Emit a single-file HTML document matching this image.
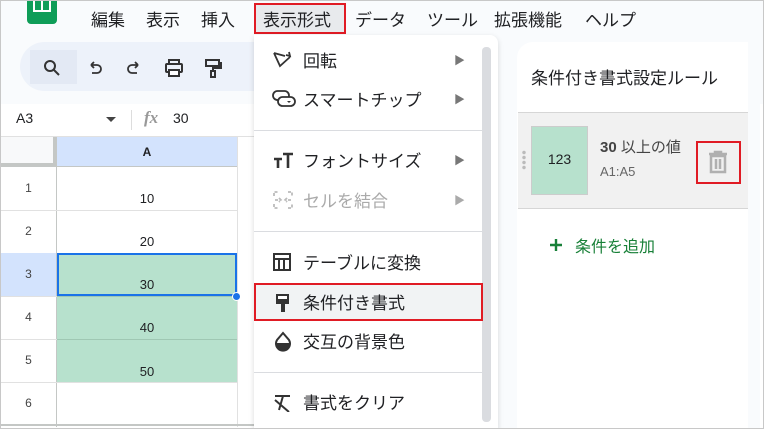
<!DOCTYPE html>
<html><head><meta charset="utf-8"><style>
*{margin:0;padding:0;box-sizing:border-box}
body{width:764px;height:429px;overflow:hidden;background:#fff;font-family:"Liberation Sans","Noto Sans CJK JP",sans-serif;position:relative;color:#202124}
.a{position:absolute}
.frame{left:0;top:0;width:764px;height:429px;border:1px solid #c8c8c8;z-index:50;pointer-events:none}
.mi{position:absolute;font-size:17px;top:6px}
.rh{position:absolute;left:0;width:57px;text-align:center;font-size:12px;color:#444}
.cv{position:absolute;left:57px;width:180px;text-align:center;font-size:13px}
.it{position:absolute;left:254px;width:228px;height:38px;font-size:17px}
.it .t{position:absolute;left:49px;top:6px}
.it .ar{position:absolute;left:200px;top:11px;font-size:11px;color:#777}
.it svg{position:absolute;left:18px;top:9px}
.dv{position:absolute;left:254px;width:228px;height:1px;background:#dadce0}
</style></head><body>
<div class="a frame"></div>
<div class="a" style="left:0;top:0;width:764px;height:104px;background:#f9fbfd"></div>
<div class="a" style="left:27px;top:0;width:30px;height:24px;background:#0f9d58;border-radius:0 0 4px 4px"></div>
<div class="a" style="left:33px;top:0;width:18px;height:12px;border:2px solid #fff;border-top:none"></div>
<div class="a" style="left:41px;top:0;width:2px;height:12px;background:#fff"></div>
<span class="mi" style="left:91px">編集</span>
<span class="mi" style="left:146px">表示</span>
<span class="mi" style="left:201px">挿入</span>
<div class="a" style="left:254px;top:3px;width:92px;height:31px;border:2px solid #e01b24;background:#e8eaed"></div>
<span class="mi" style="left:263px">表示形式</span>
<span class="mi" style="left:355px">データ</span>
<span class="mi" style="left:427px">ツール</span>
<span class="mi" style="left:494px">拡張機能</span>
<span class="mi" style="left:585px">ヘルプ</span>
<div class="a" style="left:20px;top:42px;width:260px;height:49px;background:#edf2fa;border-radius:25px"></div>
<div class="a" style="left:30px;top:50px;width:47px;height:34px;background:#e3e9f4"></div>
<svg class="a" style="left:42px;top:58px" width="20" height="20" viewBox="0 0 20 20"><circle cx="8" cy="8" r="5" fill="none" stroke="#333" stroke-width="2"/><path d="M12 12l5 5" stroke="#333" stroke-width="2"/></svg>
<svg class="a" style="left:86px;top:60px" width="18" height="18" viewBox="0 0 18 18"><path d="M5 5h6a4 4 0 010 8H6M5 5l3-3M5 5l3 3" fill="none" stroke="#333" stroke-width="1.8"/></svg>
<svg class="a" style="left:125px;top:60px" width="18" height="18" viewBox="0 0 18 18"><path d="M13 5H7a4 4 0 000 8h5M13 5l-3-3M13 5l-3 3" fill="none" stroke="#333" stroke-width="1.8"/></svg>
<svg class="a" style="left:163px;top:57px" width="22" height="22" viewBox="0 0 22 22"><rect x="6" y="3" width="10" height="4" fill="none" stroke="#333" stroke-width="2"/><rect x="3" y="7" width="16" height="8" rx="1" fill="none" stroke="#333" stroke-width="2"/><rect x="6" y="13" width="10" height="6" fill="#fff" stroke="#333" stroke-width="2"/></svg>
<svg class="a" style="left:202px;top:57px" width="22" height="22" viewBox="0 0 22 22"><rect x="4" y="3" width="13" height="6" fill="none" stroke="#333" stroke-width="2"/><path d="M17 6h2v5h-8v3" fill="none" stroke="#333" stroke-width="2"/><rect x="9" y="14" width="4" height="6" fill="none" stroke="#333" stroke-width="2"/></svg>
<div class="a" style="left:0;top:104px;width:254px;height:33px;background:#fff;border-bottom:1px solid #e1e1e1"></div>
<span class="a" style="left:16px;top:110px;font-size:14px">A3</span>
<div class="a" style="left:106px;top:117px;border:5px solid transparent;border-top:5px solid #444;border-bottom:none"></div>
<div class="a" style="left:131px;top:110px;width:1px;height:20px;background:#ddd"></div>
<span class="a" style="left:144px;top:108px;font-size:17px;font-style:italic;color:#999;font-family:'Liberation Serif',serif;font-weight:bold">fx</span>
<span class="a" style="left:173px;top:110px;font-size:14px">30</span>
<div class="a" style="left:0;top:137px;width:57px;height:30px;background:#f8f9fa;border-right:4px solid #c4c7c5;border-bottom:4px solid #c4c7c5"></div>
<div class="a" style="left:57px;top:137px;width:180px;height:30px;background:#d3e3fd;border-bottom:1px solid #c4c7c5;text-align:center;font-size:12px;font-weight:bold;padding-top:8px">A</div>
<div class="a" style="left:237px;top:137px;width:1px;height:290px;background:#e1e1e1"></div>
<div class="a" style="left:56px;top:167px;width:1px;height:260px;background:#c4c7c5"></div>
<div class="a" style="left:57px;top:253px;width:180px;height:130px;background:#b7e1cd"></div>
<div class="a" style="left:0;top:253px;width:56px;height:43px;background:#d3e3fd"></div>
<div class="a" style="left:0;top:210px;width:238px;height:1px;background:#e1e1e1"></div>
<div class="a" style="left:0;top:296px;width:238px;height:1px;background:#e1e1e1"></div>
<div class="a" style="left:57px;top:339px;width:180px;height:1px;background:#9fc7b3"></div>
<div class="a" style="left:57px;top:296px;width:180px;height:1px;background:#9fc7b3"></div>
<div class="a" style="left:0;top:339px;width:57px;height:1px;background:#e1e1e1"></div>
<div class="a" style="left:0;top:382px;width:238px;height:1px;background:#e1e1e1"></div>
<div class="a" style="left:0;top:424px;width:254px;height:2px;background:#c4c7c5"></div>
<div class="a" style="left:57px;top:253px;width:180px;height:43px;border:2px solid #1a73e8"></div>
<div class="a" style="left:232px;top:292px;width:9px;height:9px;border-radius:50%;background:#1a73e8;border:1px solid #fff"></div>
<span class="rh" style="top:181px">1</span><span class="cv" style="top:191px">10</span>
<span class="rh" style="top:224px">2</span><span class="cv" style="top:234px">20</span>
<span class="rh" style="top:267px">3</span><span class="cv" style="top:277px">30</span>
<span class="rh" style="top:310px">4</span><span class="cv" style="top:320px">40</span>
<span class="rh" style="top:353px">5</span><span class="cv" style="top:364px">50</span>
<span class="rh" style="top:396px">6</span>
<div class="a" style="left:498px;top:30px;width:262px;height:399px;background:#f9fbfd"></div>
<div class="a" style="left:517px;top:42px;width:231px;height:387px;background:#fff;border-radius:16px 0 0 0"></div>
<span class="a" style="left:531px;top:64px;font-size:17px">条件付き書式設定ルール</span>
<div class="a" style="left:518px;top:112px;width:230px;height:97px;background:#f1f1f1;border-top:1px solid #d6d6d6;border-bottom:1px solid #d6d6d6"></div>
<div class="a" style="left:522px;top:150px;width:4px;height:20px;background:radial-gradient(circle,#bbb 1.5px,transparent 2px) 0 0/4px 5px"></div>
<div class="a" style="left:531px;top:126px;width:57px;height:69px;background:#b7e1cd;border:1px solid #ccc;text-align:center;font-size:14px;padding-top:24px">123</div>
<span class="a" style="left:600px;top:136px;font-size:15px;color:#444"><b>30</b> 以上の値</span>
<span class="a" style="left:600px;top:164px;font-size:13px;color:#666">A1:A5</span>
<div class="a" style="left:696px;top:141px;width:45px;height:43px;border:2px solid #e01b24"></div>
<svg class="a" style="left:707px;top:150px" width="22" height="24" viewBox="0 0 22 24"><path d="M2 4h18M8 4V2h6v2M4 6h14v16H4z" fill="none" stroke="#b0b0b0" stroke-width="2.5"/><path d="M9 9v10M13 9v10" stroke="#b0b0b0" stroke-width="2.5"/></svg>
<svg class="a" style="left:549px;top:238px" width="14" height="14" viewBox="0 0 14 14"><path d="M7 1v12M1 7h12" stroke="#188038" stroke-width="2.4"/></svg>
<span class="a" style="left:575px;top:233px;font-size:16px;color:#188038">条件を追加</span>
<div class="a" style="left:254px;top:35px;width:244px;height:394px;background:#fff;border-radius:0 8px 0 0;box-shadow:0 2px 6px rgba(0,0,0,.15)"></div>
<div class="a" style="left:482px;top:47px;width:9px;height:375px;background:#dadce0;border-radius:4px"></div>
<div class="it" style="top:41px"><svg width="22" height="20" viewBox="0 0 22 20"><path d="M2 3l6 13 10-9M2 3l11 3M14 5l4 1-1-4" fill="none" stroke="#333" stroke-width="1.8"/></svg><span class="t">回転</span><span class="ar">▶</span></div>
<div class="it" style="top:80px"><svg width="24" height="20" viewBox="0 0 24 20"><rect x="1" y="2" width="16" height="9" rx="4.5" fill="none" stroke="#333" stroke-width="1.8"/><rect x="6" y="8" width="17" height="9" rx="4.5" fill="#fff" stroke="#333" stroke-width="1.8"/><path d="M15 12h4l-2 2z" fill="#333"/></svg><span class="t">スマートチップ</span><span class="ar">▶</span></div>
<div class="dv" style="top:130px"></div>
<div class="it" style="top:141px"><svg width="22" height="20" viewBox="0 0 22 20"><path d="M2 9h8M6 9v9M11 4h10M16 4v14" stroke="#333" stroke-width="2.6" fill="none"/></svg><span class="t">フォントサイズ</span><span class="ar">▶</span></div>
<div class="it" style="top:181px;color:#aaa"><svg width="22" height="20" viewBox="0 0 22 20"><path d="M2 6V2h4M16 2h4v4M2 14v4h4M16 18h4v-4M3 10h6M7 8l2 2-2 2M19 10h-6M15 8l-2 2 2 2" fill="none" stroke="#bbb" stroke-width="1.8" stroke-dasharray="3 1.5"/></svg><span class="t">セルを結合</span><span class="ar" style="color:#aaa">▶</span></div>
<div class="dv" style="top:231px"></div>
<div class="it" style="top:243px"><svg width="22" height="20" viewBox="0 0 22 20"><rect x="2" y="2" width="16" height="16" fill="none" stroke="#333" stroke-width="2"/><path d="M2 7h16M7 7v11M12 7v11" stroke="#333" stroke-width="2"/></svg><span class="t">テーブルに変換</span></div>
<div class="it" style="top:283px;background:#f1f3f4;border:2px solid #e01b24;width:229px"><svg width="22" height="22" viewBox="0 0 22 22" style="top:7px;left:16px"><rect x="4" y="2" width="13" height="10" fill="#333"/><rect x="6" y="4" width="9" height="3" fill="#fff"/><rect x="9" y="12" width="4" height="8" fill="#333"/></svg><span class="t" style="top:4px;left:47px">条件付き書式</span></div>
<div class="it" style="top:322px"><svg width="22" height="22" viewBox="0 0 22 22"><path d="M11 2l6 7a7 7 0 11-12 0z" fill="none" stroke="#333" stroke-width="2"/><path d="M4 12h14a7 7 0 01-14 0z" fill="#333"/></svg><span class="t">交互の背景色</span></div>
<div class="dv" style="top:372px"></div>
<div class="it" style="top:383px"><svg width="22" height="20" viewBox="0 0 22 20"><path d="M3 4h15M11 4l-4 14M3 8l14 12" stroke="#333" stroke-width="2" fill="none"/></svg><span class="t">書式をクリア</span></div>
</body></html>
